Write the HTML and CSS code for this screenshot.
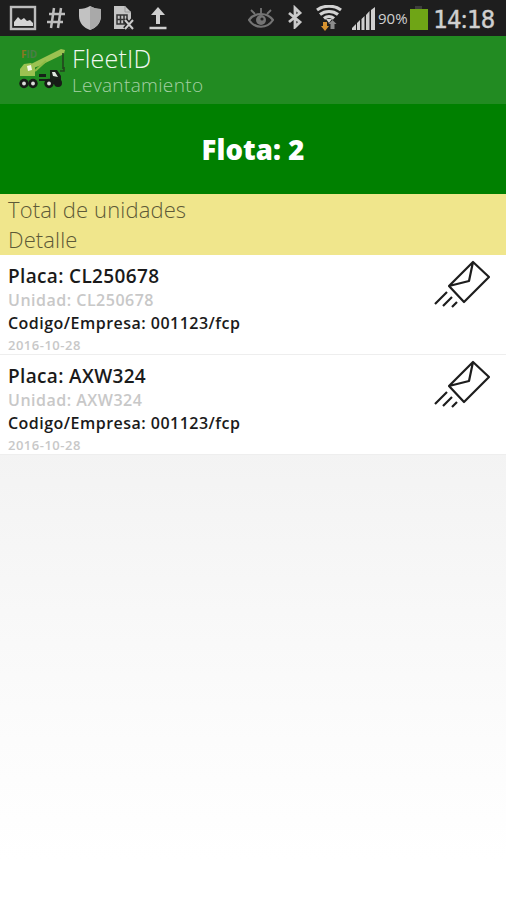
FILE: index.html
```html
<!DOCTYPE html>
<html lang="es">
  <head>
    <meta charset="UTF-8" />
    <meta name="viewport" content="width=device-width, initial-scale=1" />
    <title>FleetID</title>
    <link rel="stylesheet" href="styles.css">
  </head>
  <body>
    <div class="status-bar">
      <div class="notifications">
        <svg width="28" height="26" viewBox="0 0 28 26">
          <rect x="2" y="2" width="24" height="22" fill="#222" stroke="#bdbdbd" stroke-width="2.4" />
          <path d="M5 21v-4l4-5 3 3 3-2 3 3 3-1 3 3v3z" fill="#d5d5d5" />
        </svg>
        <svg width="18" height="26" viewBox="0 0 18 26">
          <path d="M7 3L4 23M14 3l-3 20M2 9h16M0 17h16" fill="none" stroke="#bdbdbd" stroke-width="2.5" />
        </svg>
        <svg width="24" height="26" viewBox="0 0 24 26">
          <path d="M12 1c3 2 7 3 11 3v7c0 7-5 12-11 14C6 23 1 18 1 11V4c4 0 8-1 11-3z" fill="#c2c2c2" />
          <path d="M12 1c3 2 7 3 11 3v7c0 7-5 12-11 14z" fill="#a9a9a9" />
        </svg>
        <svg width="24" height="26" viewBox="0 0 24 26">
          <path d="M2 1h11l6 6v17H2z" fill="#c4c4c4" />
          <path d="M13 1v6h6" fill="none" stroke="#999" />
          <path d="M5 10h10v9H5zM8.5 10v9M12 10v9M5 14.5h10" fill="none" stroke="#333" stroke-width="1.5" />
          <path d="M13 15l8 9M21 15l-8 9" stroke="#222" stroke-width="5" />
          <path d="M13 15l8 9M21 15l-8 9" stroke="#ccc" stroke-width="2" />
        </svg>
        <svg class="upload" width="20" height="26" viewBox="0 0 20 26">
          <path d="M10 2l7 8h-5v9H8v-9H3z" fill="#cfcfcf" />
          <path d="M1.5 23h17" stroke="#cfcfcf" stroke-width="2.5" />
        </svg>
      </div>
      <div class="system">
        <svg width="26" height="24" viewBox="0 0 26 24">
          <path d="M1 15c6-8 18-8 24 0-6 9-18 9-24 0z" fill="none" stroke="#747474" stroke-width="2.2" />
          <circle cx="13" cy="15" r="5" fill="#747474" />
          <circle cx="14" cy="14" r="1.6" fill="#222" />
          <path d="M13 8V3M7 9L3 5M19 9l4-4" stroke="#747474" stroke-width="1.8" />
        </svg>
        <svg class="bluetooth" width="16" height="24" viewBox="0 0 16 24">
          <path d="M2 8l11 9-5 5V3l5 5-11 9" fill="none" stroke="#cacaca" stroke-width="2.8" />
        </svg>
        <svg class="wifi" width="26" height="27" viewBox="0 0 26 27">
          <path d="M1 5c7-5 17-5 24 0M4 9.5c5-4 13-4 18 0M8 13.5c3-2.5 7-2.500 10 0" fill="none" stroke="#d2d2d2" stroke-width="3.2" />
          <path d="M10 14h6l-3 4z" fill="#d2d2d2" />
          <path d="M7 17h4v4h2l-4 5-4-5h2z" fill="#d69230" />
          <path d="M14.5 24v-5h-2l4-4 4 4h-2v5z" fill="#8b8b8b" />
        </svg>
        <svg class="signal" width="24" height="24" viewBox="0 0 24 24">
          <path d="M0 23v-2l4-4v6zM5 23v-7l3-3v10zM9.5 23V12l3-3v14zM14 23V8l3.5-4v19zM19 23V3l4-3v23z" fill="#cfcfcf" />
        </svg>
        <span class="percent">90%</span>
        <svg class="battery" width="18" height="25" viewBox="0 0 18 25">
          <path d="M5 1h7v3H5z" fill="#3c3c3c" />
          <path d="M0 4h18v21H0z" fill="#6fa516" />
        </svg>
        <span class="clock">14<span class="colon">:</span>18</span>
      </div>
    </div>

    <div class="app-bar">
      <svg class="logo" width="48" height="42" viewBox="0 0 48 42">
        <text class="logo-text" x="2" y="10"><tspan fill="#8a7622">F</tspan><tspan fill="#4a7e46">ID</tspan></text>
        <path d="M12 16L42 1l4 1-1 4-25 12-9 3z" fill="#9bc251" />
        <path d="M16 23l11-10" stroke="#8dbb45" stroke-width="2" />
        <path d="M1 21l4-5 7-1 4 4v9H1z" fill="#9bc251" />
        <path d="M8 18l4-1 1 5-4 1z" fill="#f4f8e8" />
        <path d="M44 5v16M41 23h4v-4" fill="none" stroke="#23451e" stroke-width="1.6" />
        <path d="M20 26h7v3h-7zM20 31h12v2H20zM31 22h7l4 6v8H31z" fill="#162218" />
        <path d="M33 24h3l3 5-5-1z" fill="#dfe9e0" />
        <circle cx="5" cy="35.5" r="4.7" fill="#171b17" /><circle cx="14" cy="35.5" r="4.7" fill="#171b17" />
        <circle cx="30" cy="35.5" r="4.7" fill="#171b17" /><circle cx="39" cy="35" r="4" fill="#171b17" />
        <circle cx="5" cy="35.5" r="1.9" fill="#ddd" /><circle cx="14" cy="35.5" r="1.9" fill="#ddd" />
        <circle cx="30" cy="35.5" r="1.9" fill="#ddd" />
      </svg>
      <div class="titles">
        <div class="app-name">FleetID</div>
        <div class="app-section">Levantamiento</div>
      </div>
    </div>

    <div class="banner">Flota: 2</div>

    <div class="summary">
      <div class="summary-total">Total de unidades</div>
      <div class="summary-detail">Detalle</div>
    </div>

    <div class="unit">
      <div class="unit-info">
        <div class="plate">Placa: CL250678</div>
        <div class="unit-id">Unidad: CL250678</div>
        <div class="company">Codigo/Empresa: 001123/fcp</div>
        <div class="date">2016-10-28</div>
      </div>
      <svg class="mail" width="58" height="50" viewBox="0 0 58 50">
        <path d="M40 2l16 15-25 25-15-16zM40 2l-4 19-20 5" />
        <path d="M14 32L2 44M19 37l-9 9M24 42l-5 5" />
      </svg>
    </div>
    <div class="unit">
      <div class="unit-info">
        <div class="plate">Placa: AXW324</div>
        <div class="unit-id">Unidad: AXW324</div>
        <div class="company">Codigo/Empresa: 001123/fcp</div>
        <div class="date">2016-10-28</div>
      </div>
      <svg class="mail" width="58" height="50" viewBox="0 0 58 50">
        <path d="M40 2l16 15-25 25-15-16zM40 2l-4 19-20 5" />
        <path d="M14 32L2 44M19 37l-9 9M24 42l-5 5" />
      </svg>
    </div>
  </body>
</html>
```

FILE: styles.css
```css
* {
  box-sizing: border-box;
}
body {
  margin: 0;
  min-height: 900px;
  font-family: 'Open Sans', sans-serif;
  background: linear-gradient(#f3f3f3 450px, #fcfcfc 740px, #ffffff 860px);
}
svg {
  display: block;
  flex-shrink: 0;
}
.status-bar {
  display: flex;
  justify-content: space-between;
  height: 36px;
  padding: 5px 11px 0 9px;
  background-color: #1e1e1e;
}
.notifications {
  display: flex;
  gap: 10px;
}
.notifications svg:nth-child(3) {
  margin-left: 3px;
}
.notifications .upload {
  margin-left: 2px;
}
.system {
  display: flex;
  color: #d0d0d0;
}
.bluetooth {
  margin-left: 13px;
}
.wifi {
  margin-left: 13px;
}
.signal {
  margin: 2px 0 0 10px;
}
.percent {
  width: 31px;
  margin-left: 2px;
  font-size: 15px;
  line-height: 26px;
}
.battery {
  margin-left: 1px;
}
.clock {
  width: 62px;
  margin-left: 5px;
  font-family: 'DejaVu Sans Mono', monospace;
  font-size: 24px;
  line-height: 28px;
  white-space: nowrap;
  letter-spacing: -0.5px;
  -webkit-text-stroke: 0.4px #d0d0d0;
}
.colon {
  font-family: 'Open Sans', sans-serif;
}
.app-bar {
  display: flex;
  height: 68px;
  padding-left: 19px;
  background-color: #228b22;
}
.logo {
  margin-top: 12px;
}
.logo-text {
  font-size: 10px;
  font-weight: 700;
}
.titles {
  margin: 6px 0 0 5px;
  font-weight: 300;
}
.app-name {
  font-size: 25px;
  line-height: 33px;
  letter-spacing: 0.2px;
  color: #f0f8f0;
}
.app-section {
  font-size: 19px;
  line-height: 20px;
  letter-spacing: 0.35px;
  color: #a5d1a5;
}
.banner {
  height: 90px;
  background-color: #008000;
  color: #ffffff;
  font-size: 27.5px;
  font-weight: 800;
  line-height: 92px;
  letter-spacing: 0.1px;
  text-align: center;
}
.summary {
  height: 61px;
  padding: 0 8px;
  background-color: #f0e68c;
  color: #5d5937;
  font-size: 22px;
  font-weight: 300;
  line-height: 30px;
  letter-spacing: 0.12px;
}
.unit {
  display: flex;
  justify-content: space-between;
  height: 100px;
  padding: 6px 15px 0 8px;
  background-color: #ffffff;
  border-bottom: 1px solid #eeeeee;
}
.plate {
  font-size: 19px;
  font-weight: 600;
  line-height: 30px;
  letter-spacing: 0.35px;
  color: #1a1a1a;
}
.unit-id {
  font-size: 16px;
  font-weight: 600;
  line-height: 18px;
  letter-spacing: 0.5px;
  color: #c8c8c8;
}
.company {
  font-size: 16px;
  font-weight: 600;
  line-height: 28px;
  letter-spacing: 0.48px;
  color: #1a1a1a;
}
.date {
  font-size: 13px;
  font-weight: 600;
  line-height: 16px;
  letter-spacing: 0.5px;
  color: #c8c8c8;
}
.mail {
  margin-top: -1px;
  fill: none;
  stroke: #1d1d1d;
  stroke-width: 2.2;
  stroke-linejoin: round;
}
```
